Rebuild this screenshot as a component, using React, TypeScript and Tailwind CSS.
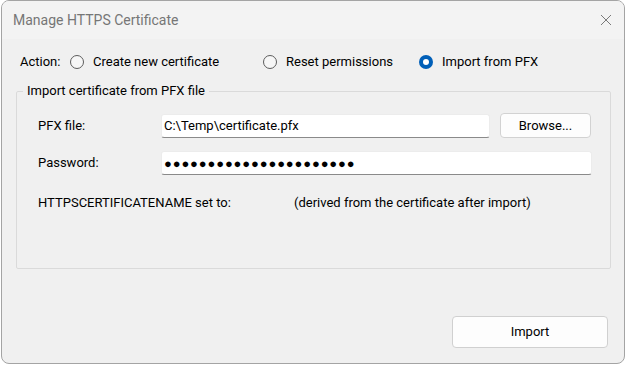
import React from 'react';

const font = { fontFamily: '"Segoe UI", Roboto, "Liberation Sans", sans-serif' };

const Radio = ({ checked, label, className = '' }: { checked?: boolean; label: string; className?: string }) => (
  <div className={`flex items-center ${className}`}>
    {checked ? (
      <span className="w-[14px] h-[14px] rounded-full bg-[#005fb8] flex items-center justify-center">
        <span className="w-[6px] h-[6px] rounded-full bg-white" />
      </span>
    ) : (
      <span className="w-[14px] h-[14px] rounded-full border border-[#5c5c5c] bg-[#f6f6f6]" />
    )}
    <span className="ml-[9px]">{label}</span>
  </div>
);

const TextBox = ({ width, children }: { width: string; children: React.ReactNode }) => (
  <div className={`${width} h-[24px] bg-white border border-[#ececec] border-b-[#8a8a8a] rounded-[3px] flex items-center pl-[2px]`}>
    {children}
  </div>
);

export default function App() {
  return (
    <div className="w-[627px] h-[365px] bg-white overflow-hidden text-[13px] text-black" style={font}>
      <div className="ml-[1px] w-[624px] h-[364px] border border-[#a4a4a4] rounded-[8px] bg-[#f0f0f0] flex flex-col overflow-hidden">
        {/* title bar */}
        <div className="h-[38px] shrink-0 bg-[#f3f3f3] flex items-center justify-between pl-[11px] pr-[12px]">
          <span className="text-[14px] text-[#767676]">Manage HTTPS Certificate</span>
          <svg width="12" height="12" viewBox="0 0 12 12" className="text-[#7a7a7a]">
            <path d="M1 1 L11 11 M11 1 L1 11" stroke="currentColor" strokeWidth="1" />
          </svg>
        </div>

        {/* action row */}
        <div className="mt-[14px] h-[18px] flex items-center pl-[18px]">
          <span className="w-[50px]">Action:</span>
          <Radio label="Create new certificate" className="w-[193px]" />
          <Radio label="Reset permissions" className="w-[156px]" />
          <Radio checked label="Import from PFX" />
        </div>

        {/* group box */}
        <div className="relative mt-[20px] ml-[14px] w-[595px] h-[178px] border border-[#dadada] rounded-[2px]">
          <span className="absolute -top-[10px] left-[6px] px-[4px] bg-[#f0f0f0] leading-[18px]">
            Import certificate from PFX file
          </span>
          <div className="flex flex-col pl-[21px] pt-[21px]">
            <div className="flex items-center">
              <span className="w-[123px]">PFX file:</span>
              <TextBox width="w-[329px]">C:\Temp\certificate.pfx</TextBox>
              <button className="ml-[10px] w-[91px] h-[25px] bg-[#fdfdfd] border border-[#d2d2d2] rounded-[4px]">
                Browse...
              </button>
            </div>
            <div className="flex items-center mt-[13px]">
              <span className="w-[123px]">Password:</span>
              <TextBox width="w-[431px]">
                <span className="text-[13px] tracking-[0.85px] leading-none">●●●●●●●●●●●●●●●●●●●●●●</span>
              </TextBox>
            </div>
            <div className="flex items-center mt-[18px]">
              <span className="w-[256px]">HTTPSCERTIFICATENAME set to:</span>
              <span>(derived from the certificate after import)</span>
            </div>
          </div>
        </div>

        {/* footer */}
        <div className="flex-1 flex items-end justify-end pr-[16px] pb-[15px]">
          <button className="w-[156px] h-[32px] bg-[#fdfdfd] border border-[#d0d0d0] rounded-[4px]">Import</button>
        </div>
      </div>
    </div>
  );
}
